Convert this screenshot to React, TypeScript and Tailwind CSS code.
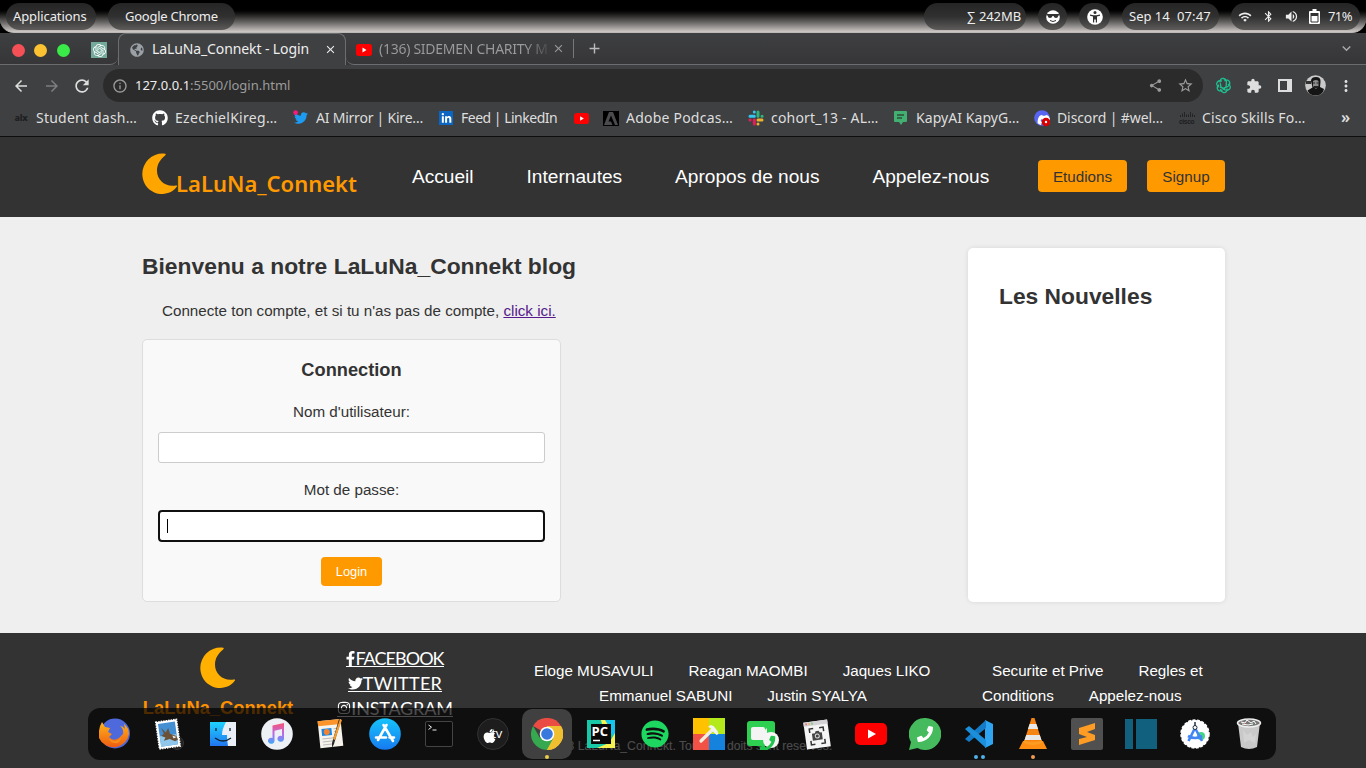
import type { ReactNode } from "react";
import { FaFacebookF, FaTwitter, FaInstagram, FaGithub, FaLinkedinIn, FaDiscord, FaGlobeAmericas, FaSpotify, FaApple, FaPhoneAlt } from "react-icons/fa";
import { MdShare, MdStarBorder, MdExtension, MdRefresh, MdArrowBack, MdArrowForward, MdBluetooth, MdVolumeUp, MdClose, MdAdd, MdKeyboardArrowDown, MdMoreVert, MdInfoOutline, MdWifi } from "react-icons/md";
import { SiOpenai } from "react-icons/si";

const ui = "font-['Noto_Sans',sans-serif]";

function Moon({ color }: { color: string }) {
  return (
    <svg width="36" height="42" viewBox="0 0 36 42" className="block shrink-0">
      <path fill={color} d="M22.800 2.800C24.600 1.400 23.900.6 21 .6A20.300 20.300 0 0 0 .3 20.700C.3 32 9 41 20.300 41c6.200 0 11.400-3 14.200-6.900 1.100-1.400.6-1.800-.7-1.600C23 34.500 15 26.500 15 17.700c0-6.300 3.300-11.300 7.800-14.900Z" />
    </svg>
  );
}

function YouTube({ w, h }: { w: number; h: number }) {
  return (
    <svg width={w} height={h} viewBox="0 0 32 22" preserveAspectRatio="none" className="shrink-0">
      <rect width="32" height="22" rx="5" fill="#f00" />
      <path d="M13 6.500v9l8-4.500Z" fill="#fff" />
    </svg>
  );
}

function Slack() {
  return (
    <svg width="16" height="16" viewBox="0 0 16 16">
      <g strokeWidth="3" strokeLinecap="round">
        <path d="M6.300 2v.1M2 6.200h4.300" stroke="#36c5f0" />
        <path d="M10 2v4.200M14 6.200h.1" stroke="#2eb67d" />
        <path d="M14 10h-4M10 14v.1" stroke="#ecb22e" />
        <path d="M6.300 14v-4M2 10h.1" stroke="#e01e5a" />
      </g>
    </svg>
  );
}

function Adobe() {
  return (
    <svg width="16" height="15" viewBox="0 0 16 15">
      <rect width="16" height="15" fill="#000" />
      <path d="M6 1h4l5 13h-3L8 4.500 5.500 10.500H8L9.500 14H1Z" fill="#4b4b4d" />
    </svg>
  );
}

function Chat() {
  return (
    <svg width="14" height="14" viewBox="0 0 14 14">
      <path d="M1 0h11q1 0 1 1v9q0 1-1 1H9l-2 3-2-3H1q-1 0-1-1V1q0-1 1-1Z" fill="#42b071" />
      <path d="M3 4h7M3 7h5" stroke="#2d4e3c" strokeWidth="1.300" />
    </svg>
  );
}

function Discord() {
  return (
    <svg width="16" height="16" viewBox="0 0 16 16">
      <circle cx="8" cy="8" r="7.800" fill="#5865f2" />
      <FaDiscord x="3" y="3" width="10" height="10" color="#fff" />
      <circle cx="12" cy="12" r="4.300" fill="#d80000" />
      <circle cx="12" cy="12" r="1.200" fill="#fff" />
    </svg>
  );
}

function Cisco() {
  return (
    <svg width="16" height="14" viewBox="0 0 16 14">
      <path d="M1.500 4v2M3.500 2.500v3.500M5.500 1v5M7.500 3.500v2.500M9.500 3.500v2.500M11.500 1v5M13.500 2.500v3.500M15.500 4v2" stroke="#1c1d1f" strokeWidth=".8" />
      <text x="0" y="13" fontSize="6.500" fontWeight="700" letterSpacing="-.3" fill="#1c1d1f" fontFamily="Liberation Sans">cisco</text>
    </svg>
  );
}

function TwitterMark() {
  return (
    <svg width="16" height="16" viewBox="0 0 16 16">
      <FaTwitter x="1" y="1" width="14" height="14" color="#1d9bf0" />
      <circle cx="2.600" cy="2.600" r="2.300" fill="#f91880" />
    </svg>
  );
}

function Pill({ className, children }: { className: string; children: ReactNode }) {
  return (
    <div className={`flex h-[27px] shrink-0 items-center rounded-full bg-linear-to-b from-[#252525] via-[#303030] to-[#5e5c5b] text-[13px] whitespace-nowrap text-[#eee] ${className}`}>
      {children}
    </div>
  );
}

function SystemBar() {
  return (
    <div className={`h-[33px] bg-black ${ui}`}>
      <div className="flex h-[33px] rounded-b-[14px] border-b border-[#bdb9b7] bg-linear-to-b from-black from-25% via-[#4a4948] via-60% to-[#cfcac8] pt-[3px] pl-1.5">
        <Pill className="w-[90px] pl-[7px] tracking-[-0.1px]">Applications</Pill>
        <Pill className="ml-3 w-[127px] pl-[17px] tracking-[-0.25px]">Google Chrome</Pill>
        <Pill className="ml-[689px] w-[102px] justify-end pr-[5px] tracking-[-0.1px]">∑ 242MB</Pill>
        <Pill className="ml-3 w-[29px] justify-center">
          <svg width="14" height="14" viewBox="0 0 14 14">
            <circle cx="7" cy="7" r="6.800" fill="#fff" />
            <path d="M1 4h12v1l-.7 1q-.5 2-2.300 2T7.500 6h-1Q6 8 4 8T1.700 6L1 5Z" fill="#333" />
            <path d="M4 10.500q3 2 6 0" stroke="#333" fill="none" />
          </svg>
        </Pill>
        <Pill className="ml-3 w-[31px] justify-center">
          <svg width="16" height="16" viewBox="0 0 16 16">
            <circle cx="8" cy="8" r="7.800" fill="#fff" />
            <circle cx="8" cy="3.500" r="1.500" fill="#333" />
            <path d="M3 5.500l3.500.7h3L13 5.500v1.300l-3 .8v6H8.800v-3H7.200v3H6v-6l-3-.8Z" fill="#333" />
          </svg>
        </Pill>
        <Pill className="ml-3 w-[97px] pl-[7px]"><span className="w-[48px]">Sep 14</span><span className="tracking-[0.1px]">07:47</span></Pill>
        <Pill className="ml-3 w-[129px] pl-[7px] text-[11px]">
          <MdWifi size={14} /><MdBluetooth size={13} className="ml-[10px]" /><MdVolumeUp size={15} className="ml-[9px]" />
          <svg width="11" height="15" viewBox="0 0 11 15" className="mr-2 ml-[10px]">
            <path d="M3.500 0h4v2H10q1 0 1 1v11q0 1-1 1H1q-1 0-1-1V3q0-1 1-1h2.500Z" fill="#fff" />
            <path d="M2 4h7v3H2Z" fill="#333" />
            <path d="M2 4v9h7V4" stroke="#333" fill="none" />
          </svg>
          <span className="tracking-[-0.6px]">71%</span>
        </Pill>
      </div>
    </div>
  );
}

function TabStrip() {
  return (
    <div className={`flex h-8 bg-linear-to-b from-[#3e3f41] to-[#363639] text-[14px] whitespace-nowrap ${ui}`}>
      <div className="flex w-[118px] items-center rounded-br-lg border-b border-[#6c6d70] pt-[3px] pl-3">
        <i className="size-[13px] rounded-full bg-[#f65057]" />
        <i className="ml-[9px] size-[13px] rounded-full bg-[#fdc231]" />
        <i className="ml-[10px] size-[13px] rounded-full bg-[#39ea49]" />
        <div className="ml-[21px] flex size-4 items-center justify-center bg-[#74aa9c]"><SiOpenai size={13} color="#fff" /></div>
      </div>
      <div className="flex w-[228px] items-center rounded-t-lg border border-b-0 border-[#6c6d70] bg-[#3f4042] pl-[11px] text-[#eee]">
        <FaGlobeAmericas size={14} color="#9aa0a6" />
        <span className="ml-[8px] w-[167px] pb-0.5 tracking-[-0.11px]">LaLuNa_Connekt - Login</span>
        <MdClose size={13} className="ml-[5px]" />
      </div>
      <div className="flex flex-1 items-center rounded-bl-lg border-b border-[#6c6d70] pl-[10px] text-[#9a9b9e]">
        <div className="pt-0.5"><YouTube w={16} h={12} /></div>
        <span className="ml-[7px] w-[173px] bg-linear-to-r from-[#9a9b9e] from-85% to-transparent bg-clip-text tracking-[-0.27px] text-transparent">(136) SIDEMEN CHARITY M</span>
        <MdClose size={13} />
        <i className="ml-2 h-[19px] w-px bg-[#77787a]" />
        <MdAdd size={17} className="ml-3 text-[#bbb]" />
        <MdKeyboardArrowDown size={17} className="mr-[11px] ml-auto text-[#aaa]" />
      </div>
    </div>
  );
}

function Toolbar() {
  return (
    <div className={`flex h-[38px] items-center bg-[#3f4042] pt-[3px] text-[#dedede] ${ui}`}>
      <MdArrowBack size={18} className="ml-3" />
      <MdArrowForward size={18} className="ml-[13px] text-[#7d7e80]" />
      <MdRefresh size={20} className="ml-[11px]" />
      <div className="ml-[11px] flex h-[33px] w-[1100px] items-center rounded-full bg-[#2b2b2b] pl-[9px] text-[13px] text-[#9b9b9b]">
        <MdInfoOutline size={16} />
        <span className="ml-[7px]"><span className="text-[#eee]">127.0.0.1</span>:5500/login.html</span>
        <MdShare size={15} className="ml-auto" />
        <MdStarBorder size={17} className="mr-[9px] ml-[14px]" />
      </div>
      <svg width="17" height="17" viewBox="0 0 17 17" className="ml-3" fill="none" stroke="#20bf90" strokeWidth="1.300">
        <path d="M5 5.500Q5 1 8.500 1.500 11 2 11.500 5L11 10 8 12.500" />
        <path d="M5 5.500Q5 1 8.500 1.500 11 2 11.500 5L11 10 8 12.500" transform="rotate(60 8.500 8.500)" />
        <path d="M5 5.500Q5 1 8.500 1.500 11 2 11.500 5L11 10 8 12.500" transform="rotate(120 8.500 8.500)" />
        <path d="M5 5.500Q5 1 8.500 1.500 11 2 11.500 5" transform="rotate(180 8.500 8.500)" />
        <path d="M5 5.500Q5 1 8.500 1.500 11 2 11.500 5" transform="rotate(240 8.500 8.500)" />
        <path d="M5 5.500Q5 1 8.500 1.500 11 2 11.500 5" transform="rotate(300 8.500 8.500)" />
      </svg>
      <MdExtension size={16} className="ml-[14px]" />
      <svg width="14" height="13" viewBox="0 0 14 13" className="ml-[16px]"><path d="M0 0h14v13H0Z" fill="#ddd" /><path d="M2 2h7v9H2Z" fill="#3f4042" /></svg>
      <svg width="21" height="21" viewBox="0 0 21 21" className="ml-[13px]">
        <circle cx="10.500" cy="10.500" r="10.300" fill="#c9c9c9" />
        <path d="M1 6h5v3H1Z" fill="#333" />
        <path d="M6 6q0-4 5-4t4.500 5l-.5 5 4 2-1 3q-3 3.500-7.500 3.500-6 0-8-5l5-3Z" fill="#151515" />
        <path d="M8 6q3-2 5.500 0v5l-2.500 3-3-3Z" fill="#8c8c8c" /><path d="M8 7.500h2v1H8ZM11.500 7.500h2v1h-2ZM9 11h4v2H9Z" fill="#222" />
      </svg>
      <MdMoreVert size={18} className="ml-[11px]" />
    </div>
  );
}

const bookmarks: { icon: ReactNode; text: string; cls: string }[] = [
  { icon: <span className="text-[9px] font-extrabold tracking-[-0.3px] text-[#1d1e20]">alx</span>, text: "Student dash…", cls: "w-[139px] tracking-[0.22px]" },
  { icon: <FaGithub size={16} color="#fff" />, text: "EzechielKireg…", cls: "w-[141px] tracking-[0.3px]" },
  { icon: <TwitterMark />, text: "AI Mirror | Kire…", cls: "w-[145px] tracking-[-0.22px]" },
  { icon: <span className="flex size-[14px] items-center justify-center bg-[#0a66c2]"><FaLinkedinIn size={11} color="#fff" /></span>, text: "Feed | LinkedIn", cls: "w-[135px] tracking-[-0.5px]" },
  { icon: <YouTube w={15} h={11} />, text: "", cls: "w-[30px]" },
  { icon: <Adobe />, text: "Adobe Podcas…", cls: "w-[145px] tracking-[0.22px]" },
  { icon: <Slack />, text: "cohort_13 - AL…", cls: "w-[145px] tracking-[0.2px]" },
  { icon: <Chat />, text: "KapyAI KapyG…", cls: "w-[141px] tracking-[0.06px]" },
  { icon: <Discord />, text: "Discord | #wel…", cls: "w-[145px] tracking-[-0.1px]" },
  { icon: <Cisco />, text: "Cisco Skills Fo…", cls: "w-[145px] tracking-[0.15px]" },
];

function Bookmarks() {
  return (
    <div className={`flex h-[34px] items-center border-b border-[#0e0e0e] bg-[#3f4042] pl-[13px] text-[14px] whitespace-nowrap text-[#dedede] ${ui}`}>
      {bookmarks.map((b, i) => (
        <div key={i} className={`flex shrink-0 items-center pb-[3px] ${b.cls}`}>
          <span className="mr-[7px] flex h-4 w-4 shrink-0 items-center justify-center">{b.icon}</span><span className="pb-0.5">{b.text}</span>
        </div>
      ))}
      <span className="-mt-1.5 ml-[17px] text-[16px] font-semibold">»</span>
    </div>
  );
}

function SiteHeader() {
  return (
    <header className="flex h-20 bg-[#333] pl-[142px] text-[19.1px] whitespace-nowrap text-white">
      <div className="flex w-[270px] pt-4">
        <Moon color="#ffa500" />
        <span className="mt-[13px] -ml-[2px] font-['Noto_Sans',sans-serif] text-[22px] leading-[34px] font-semibold text-[#ff9900]">LaLuNa_Connekt</span>
      </div>
      <nav className="flex w-[626px] items-center gap-[53px]">
        <a>Accueil</a><a>Internautes</a><a>Apropos de nous</a><a>Appelez-nous</a>
      </nav>
      <div className="mt-[23px] flex h-8 gap-5 text-[15.2px] leading-[33px] text-[#333]">
        <button className="w-[89px] rounded bg-[#ff9900]">Etudions</button>
        <button className="w-[78px] rounded bg-[#ff9900]">Signup</button>
      </div>
    </header>
  );
}

function Main() {
  return (
    <main className="flex h-[416px] items-start bg-[#efefef] pl-[142px] text-[15.2px] text-[#333]">
      <section className="w-[826px] pt-[34px]">
        <h2 className="text-[22.85px] leading-[30px] font-bold whitespace-nowrap">Bienvenu a notre LaLuNa_Connekt blog</h2>
        <p className="mt-[19px] pl-5 leading-[22px]">Connecte ton compte, et si tu n'as pas de compte, <a className="text-[#551a8b] underline">click ici.</a></p>
        <form className="mt-[17px] flex h-[263px] w-[419px] flex-col items-center rounded-[5px] border border-[#ddd] bg-[#f9f9f9] px-[15px]">
          <h3 className="mt-[18px] text-[18.24px] leading-6 font-bold">Connection</h3>
          <label className="mt-[19px] leading-[22px]">Nom d'utilisateur:</label>
          <div className="mt-[9px] h-[31px] w-full rounded-[3px] border border-[#ccc] bg-white" />
          <label className="mt-4 leading-[22px]">Mot de passe:</label>
          <div className="mt-[9px] flex h-8 w-full items-center rounded-[4px] border-2 border-[#101010] bg-white pl-[7px]"><i className="h-[14px] w-px bg-black" /></div>
          <button className="mt-[15px] h-[29px] w-[61px] rounded bg-[#ff9900] text-[12.8px] text-white">Login</button>
        </form>
      </section>
      <aside className="mt-[31px] h-[354px] w-[257px] rounded-[5px] bg-white pt-[33px] pl-[31px] shadow-[0_0_5px_rgba(0,0,0,0.1)]">
        <h2 className="text-[22.8px] leading-[30px] font-bold">Les Nouvelles</h2>
      </aside>
    </main>
  );
}

const social = "flex h-[17px] items-center border-b border-white";

function Footer() {
  return (
    <footer className="h-[135px] overflow-hidden bg-[#333] text-[15.2px] leading-[25px] whitespace-nowrap text-white">
      <div className="flex h-[100px] pl-[142px]">
        <div className="flex w-[152px] flex-col items-center pt-[14px]">
          <Moon color="#ffb000" />
          <b className="mt-[6px] text-[18.3px] text-[#ff9100]">LaLuNa_Connekt</b>
        </div>
        <div className="ml-[26px] flex w-[150px] flex-col items-center pt-[13px] font-['Lato',sans-serif] text-[18px]">
          <a className="flex h-[25px] items-center"><span className={social}><FaFacebookF size={15} className="-mr-[3px] -ml-[3px]" /><span className="tracking-[-0.95px]">FACEBOOK</span></span></a>
          <a className="flex h-[25px] items-center"><span className={social}><FaTwitter size={15} /><span className="tracking-[0.3px]">TWITTER</span></span></a>
          <a className="flex h-[25px] items-center"><span className={social}><FaInstagram size={14} /><span className="tracking-[-0.2px]">INSTAGRAM</span></span></a>
        </div>
        <div className="ml-[64px] w-[398px] pt-[25px]">
          <div className="flex gap-[35px]"><a>Eloge MUSAVULI</a><a>Reagan MAOMBI</a><a>Jaques LIKO</a></div>
          <div className="flex gap-[35px] pl-[65px]"><a>Emmanuel SABUNI</a><a>Justin SYALYA</a></div>
        </div>
        <div className="ml-[50px] pt-[25px]">
          <div className="flex gap-[35px] pl-[10px]"><a>Securite et Prive</a><a>Regles et</a></div>
          <div className="flex gap-[35px]"><a>Conditions</a><a>Appelez-nous</a></div>
        </div>
      </div>
      <p className="pt-px pl-[535px] text-[12.16px] text-white">© 2023 LaLuNa_Connekt. Tous les doits sont reserves.</p>
    </footer>
  );
}

const S = ({ children }: { children: ReactNode }) => <svg width="32" height="32" viewBox="0 0 32 32">{children}</svg>;

const dock: ReactNode[] = [
  <S><defs><linearGradient id="ff" x2="0" y2="1"><stop stopColor="#ffb51b" /><stop offset="1" stopColor="#ed5b12" /></linearGradient></defs><circle cx="16" cy="15.500" r="15" fill="#4d69dc" /><path d="M3 4l3 5 5 1-2 4 4 2-3 3q4 5 10 1l4-4q1-5-3-8 3 0 5 3l-1-5q5 4 5 10a15.800 15.800 0 0 1-30 4Q-1 10 3 4Z" fill="url(#ff)" /><path d="M10 20q6 6 12 0-1 6-6 5-5 0-6-5Z" fill="#f78d1d" /></S>,
  <S><circle cx="24" cy="25" r="6.500" fill="#222" stroke="#333" /><g transform="rotate(-8 16 16)"><path d="M4.500 2.500h21v27h-21Z" fill="#fff" stroke="#fff" strokeDasharray="1.500 1" strokeWidth="1.500" /><path d="M6.500 4.500h17v23h-17Z" fill="#438fd2" /><path d="M6.500 17h17v10.500h-17Z" fill="#8fc6ec" /><path d="M9 9l4 5 3-4 1 6 6 3 1 4-3 1-5-3-6 1 2-3-4-2 3-2Z" fill="#6b5136" /><path d="M19 18l4 2-3 1Z" fill="#eee" /></g></S>,
  <S><defs><linearGradient id="fi" x2="0" y2="1"><stop stopColor="#1ed2ff" /><stop offset="1" stopColor="#2176ef" /></linearGradient></defs><path d="M3 4h26v24H3Z" fill="#e9eef7" /><path d="M3 4h16q-4 7-4 13h5q0 6 1 11H3Z" fill="url(#fi)" /><path d="M9 10v3M23 10v3M8 20q8 6 16 0" stroke="#123" strokeWidth="1.300" fill="none" /></S>,
  <S><defs><linearGradient id="mu" x2="0" y2="1"><stop stopColor="#fa5272" /><stop offset=".55" stopColor="#b46cf0" /><stop offset="1" stopColor="#3baaf5" /></linearGradient></defs><circle cx="16" cy="16" r="15.800" fill="#edf0f5" /><path d="M11.500 7.500L23 5v16a3.300 3 0 1 1-2-3v-7l-7.500 1.700V23a3.300 3 0 1 1-2-3Z" fill="url(#mu)" /></S>,
  <S><g transform="rotate(-6 16 16)"><path d="M4 2h23v27H4Z" fill="#f6f3ec" /><path d="M4 2h23v5H4Z" fill="#fa942b" /><path d="M7 10h10v7H7Z" fill="#1588e5" /><circle cx="12" cy="13.500" r="3" fill="#f58233" /><path d="M19 11h5M19 14h4M7 20h12M7 23h11M7 26h9" stroke="#bbb" /></g><path d="M26 2l-7 24-2 4v-5L24 1Z" fill="#292929" /><path d="M25 1l2 1-7 20-2-1Z" fill="#f59b30" /></S>,
  <S><defs><linearGradient id="as" x2="0" y2="1"><stop stopColor="#16c4fc" /><stop offset="1" stopColor="#167af0" /></linearGradient></defs><circle cx="16" cy="16" r="15.800" fill="url(#as)" /><path d="M17.500 7L9 22M14.500 7L24 23M7 19.500h10M20.500 19.500H25" stroke="#fff" strokeWidth="2.600" strokeLinecap="round" /></S>,
  <S><rect x="2.500" y="3.500" width="27" height="25" rx="1.500" fill="#0b0b0b" stroke="#444" /><path d="M5.500 7l3 2.200-3 2.300M9.500 12h4" stroke="#eee" fill="none" /></S>,
  <S><circle cx="16" cy="16" r="15.500" fill="#1d1d1d" stroke="#333" /><FaApple x="4.500" y="10" width="11" height="11" color="#fff" /><text x="14.500" y="20" fontSize="13" fontWeight="500" letterSpacing="-.3" fill="#fff" fontFamily="Open Sans">tv</text></S>,
  <S><path d="M16 16L2.100 8A16 16 0 0 1 29.900 8Z" fill="#ea4c43" /><path d="M16 16V8h13.900A16 16 0 0 1 16 32Z" fill="#f4c12e" /><path d="M2.100 8L9 20l7 4-4 7.500A16 16 0 0 1 2.100 8Z" fill="#36a84f" /><path d="M9 20l7 3 7-3-7 12a16 16 0 0 1-7-2Z" fill="#36a84f" /><path d="M23 19l-7 13a16 16 0 0 0 14-24H19Z" fill="#efbf2f" /><circle cx="16" cy="16" r="7.300" fill="#fff" /><circle cx="16" cy="16" r="5.800" fill="#3978dd" /></S>,
  <S><path d="M2 2h28v28H2Z" fill="#18c9a8" /><path d="M20 2h10v17L20 10Z" fill="#16c5eb" /><path d="M16 2h4l3 5-6-1ZM30 15v15H12l12-5Z" fill="#f5f250" /><path d="M6 6h20v20H6Z" fill="#090909" /><text x="6.500" y="17.500" fontSize="13" fontWeight="700" fill="#fff" fontFamily="Open Sans">PC</text><path d="M8 22.500h7" stroke="#fff" strokeWidth="1.500" /></S>,
  <FaSpotify size={28} color="#1ed760" />,
  <S><path d="M0 0h16v16H0Z" fill="#ffc100" /><path d="M16 0h16v16H16Z" fill="#b4e91c" /><path d="M0 16h16v16H0Z" fill="#f25245" /><path d="M16 16h16v16H16Z" fill="#1583dd" /><path d="M8 23L19 12" stroke="#f4eee2" strokeWidth="3.200" strokeLinecap="round" /><path d="M15 9l2.500-2 3 1 4 5 1 3-2 1-4-4-2-3Z" fill="#f4f4f4" /></S>,
  <S><rect y="3" width="28" height="25" rx="3" fill="#2ed052" /><rect x="4" y="9" width="14" height="13" rx="2" fill="#f4f4f4" /><path d="M17 13l3-3v10l-3-3Z" fill="#f4f4f4" /><circle cx="24" cy="22" r="8" fill="#f5f5f5" /><g transform="translate(48 0) scale(-1 1)"><FaPhoneAlt x="19.500" y="17.500" width="9" height="9" color="#22c34c" /></g></S>,
  <S><g transform="rotate(-8 16 16)"><path d="M4 3h24v27H4Z" fill="#f5f5f5" /><path d="M4 3h24v4H4Z" fill="#d5d2d5" /><path d="M6 5h1" stroke="#e44" strokeWidth="2" /><path d="M9 5h1" stroke="#ea3" strokeWidth="2" /><path d="M12 5h1" stroke="#4b5" strokeWidth="2" /><path d="M9 14v-4h4M19 10h4v4M9 22v4h4M19 26h4v-4" fill="none" stroke="#333" strokeWidth="1.500" /><path d="M11 15h3l1-2h3l1 2h2v7H11Z" fill="#444" /><circle cx="16" cy="18" r="2" fill="none" stroke="#ddd" /></g></S>,
  <YouTube w={32} h={22} />,
  <S><path d="M16 0a16 16 0 1 1-7.500 30L0 32l2-8A16 16 0 0 1 16 0Z" fill="#45bb5e" /><g transform="translate(32 0) scale(-1 1)"><FaPhoneAlt x="8" y="8" width="16" height="16" color="#fff" /></g></S>,
  <S><path d="M22 2l8 4v20l-8 4V2Z" fill="#2fa4f3" /><path d="M23 2v8L6 24l-4-3Z" fill="#137bc8" /><path d="M2 11l4-3 17 14v8Z" fill="#1b8fdb" /></S>,
  <S><path d="M7 24L14.500 0h3L25 24Z" fill="#f68413" /><path d="M12.600 6h6.800l1.800 5H10.900ZM9.200 17h13.600l1.700 5H7.500Z" fill="#e8e8e8" /><path d="M6 23h20l4 8H2Z" fill="#ff8e13" /><path d="M7 22q9 5 18 0v3q-9 4-18 0Z" fill="#fb9d25" /></S>,
  <S><rect width="32" height="32" rx="2" fill="#505050" /><path d="M24 5v6l-8 3 8 3v5L8 27v-6l8-2-8-3v-6Z" fill="#ff9c24" /></S>,
  <S><path d="M0 1h8v30H0ZM11 1h21v30H11Z" fill="#11607d" /></S>,
  <S><circle cx="16" cy="16" r="14" fill="#fff" stroke="#fff" strokeWidth="1.500" strokeDasharray="3 1.500" /><circle cx="22" cy="18" r="4" fill="#45d487" /><path d="M16 10L9.500 23M16 10l7 13M9 18q7 4 14 0" stroke="#4285f4" strokeWidth="2.600" fill="none" /><circle cx="16" cy="9.500" r="2" fill="#fff" stroke="#234" /><path d="M16 4v4" stroke="#234" strokeWidth="1.500" /></S>,
  <S><path d="M5 5h22l-3 24q-8 4-16 0Z" fill="#c9c9c9" /><path d="M10 12l4 5 4-3 2 5 3-3-1 9-6-3-5 3Z" fill="#d3d3d3" /><ellipse cx="16" cy="5" rx="11.500" ry="4" fill="#777" stroke="#eee" strokeWidth="1.500" /><path d="M8 4l4 1 2-3 4 3 3-2 2 3M9 6l6 1 5-1" stroke="#fff" fill="none" /><path d="M12 5l1 1" stroke="#d44" /><path d="M20 6l1-1" stroke="#4a6" /></S>,
];

function Dock() {
  return (
    <div className="absolute top-[708px] left-[88px] grid h-[52px] w-[1188px] grid-cols-22 rounded-xl bg-black/70">
      {dock.map((icon, i) => (
        <div key={i} className="flex justify-center">
          <div className={`relative mt-px flex h-[50px] w-[50px] items-center justify-center rounded-[10px] ${i === 8 ? "bg-[#404040]" : ""}`}>
            {icon}
            {i === 8 && <i className="absolute bottom-0 size-1 rounded-full bg-[#e9cf4b]" />}
            {i === 16 && <span className="absolute bottom-0 flex gap-[3px]"><i className="size-1 rounded-full bg-[#4fb2ea]" /><i className="size-1 rounded-full bg-[#4fb2ea]" /></span>}
            {i === 17 && <i className="absolute bottom-0 size-1 rounded-full bg-[#f09b50]" />}
          </div>
        </div>
      ))}
    </div>
  );
}

export default function App() {
  return (
    <div className="relative h-[768px] w-[1366px] overflow-hidden bg-[#333] font-['Liberation_Sans',Arial,sans-serif]">
      <SystemBar />
      <TabStrip />
      <Toolbar />
      <Bookmarks />
      <SiteHeader />
      <Main />
      <Footer />
      <Dock />
    </div>
  );
}
